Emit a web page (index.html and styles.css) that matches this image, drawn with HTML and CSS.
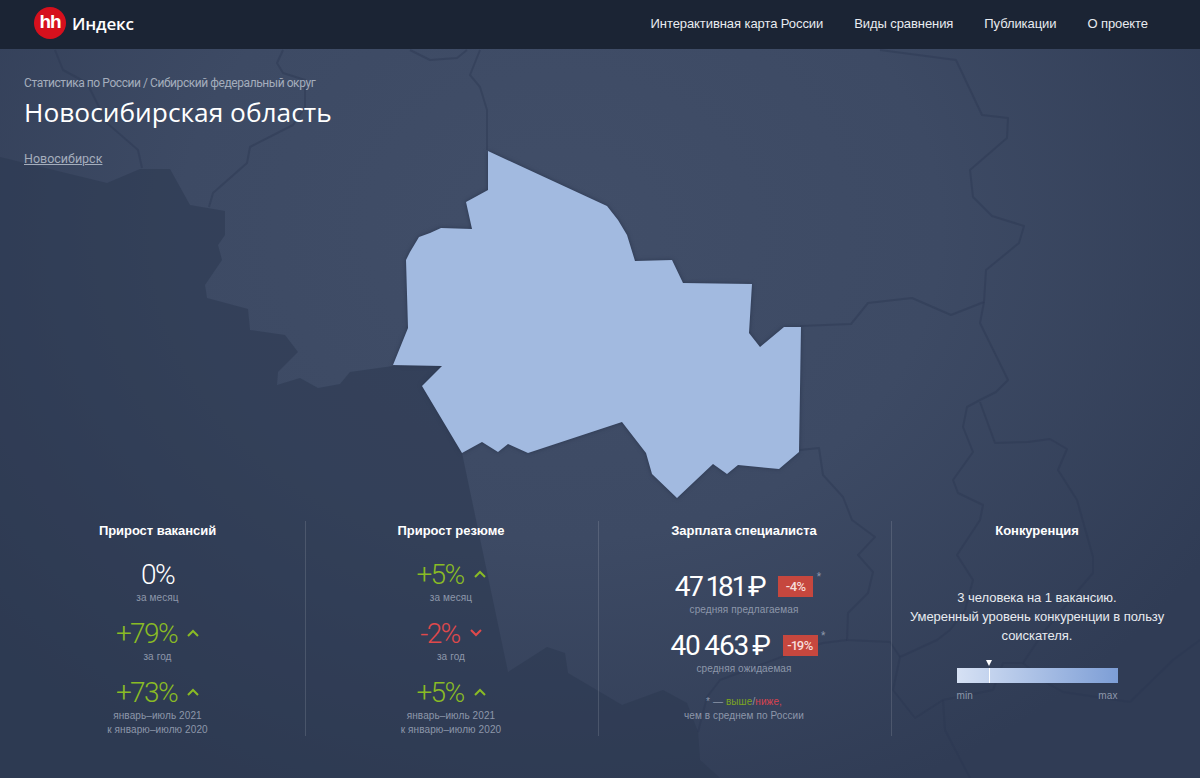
FILE: index.html
```html
<!DOCTYPE html>
<html lang="ru">
<head>
<meta charset="utf-8">
<title>hh Индекс — Новосибирская область</title>
<link rel="stylesheet" href="styles.css">
</head>
<body>
<svg class="map" viewBox="0 0 1200 778" width="1200" height="778" aria-hidden="true">
  <polygon class="map-dark" points="0,157 107,183 140,169 170,169 190,205 225,211 225,235 218,245 222,260 205,285 207,298 248,309 250,330 285,335 298,352 278,372 277,385 300,378 318,388 340,384 350,372 393,366 442,366 423,387 462,453 508,672 547,647 565,653 568,673 622,705 663,690 687,703 698,732 700,760 720,778 0,778"/>
  <polyline class="map-line" points="55,50 63,70 87,83 107,123 138,150 142,168"/>
  <polyline class="map-line" points="283,50 277,63 283,73 305,80 305,107 293,125 250,147 247,163 213,193 209,207"/>
  <polyline class="map-line" points="410,50 430,60 457,58 467,50"/>
  <polyline class="map-line" points="480,50 470,75 480,87 487,110 487,150"/>
  <polyline class="map-line" points="880,50 956,60 982,115 1008,118 1007,138 970,170 973,197 992,216 1024,226 1019,243 986,270 984,302 951,315 912,298 868,303 851,324 800,326"/>
  <polyline class="map-line" points="984,302 980,323 1008,380 996,392 980,400 967,407 963,427 973,452 953,480 958,493 983,505 980,520 957,555 973,580 965,610 950,630 937,640 900,657 893,690 915,718 943,700 993,690 1003,663 1023,663 1043,633 1070,600 1093,573 1093,557 1077,500 1058,470 1067,449 1050,439 1028,442 995,443 980,402"/>
  <polyline class="map-line" points="943,700 945,730 970,778"/>
  <polyline class="map-line" points="1023,663 1047,683 1063,692 1130,702 1173,660 1200,640"/>
  <polyline class="map-line" points="800,450 819,448 823,475 843,497 852,520 875,537 858,555 873,572 868,593 848,613 847,640 890,642 900,657"/>
  <polyline class="map-line" points="847,640 823,643 800,650 760,665 720,680 707,697 698,732"/>
  <polygon class="map-region" points="488,151 607,206 618,220 627,235 635,261 672,260 683,283 752,284 749,333 760,347 784,327 801,327 799,452 779,469 738,465 727,474 713,464 677,498 652,474 646,453 622,422 528,453 508,444 498,452 482,442 462,453 422,386 442,366 393,365 408,328 406,260 410,252 419,237 430,233 441,228 472,229 466,202 488,190"/>
</svg>

<header class="topbar">
  <a class="brand" href="#">
    <span class="brand-mark">hh</span>
    <span class="brand-name">Индекс</span>
  </a>
  <nav class="nav">
    <a href="#">Интерактивная карта России</a>
    <a href="#">Виды сравнения</a>
    <a href="#">Публикации</a>
    <a href="#">О проекте</a>
  </nav>
</header>

<main class="content">
  <section class="intro">
    <p class="crumbs">Статистика по России / Сибирский федеральный округ</p>
    <h1 class="title">Новосибирская область</h1>
    <a class="city" href="#">Новосибирск</a>
  </section>

  <section class="stats">
    <article class="col">
      <h2 class="col-title">Прирост вакансий</h2>
      <div class="items">
        <div class="item">
          <div class="value">0%</div>
          <div class="label">за месяц</div>
        </div>
        <div class="item">
          <div class="value up">+79%<svg class="chev" viewBox="0 0 12 8"><polyline points="1,7 6,2 11,7"/></svg></div>
          <div class="label">за год</div>
        </div>
        <div class="item">
          <div class="value up">+73%<svg class="chev" viewBox="0 0 12 8"><polyline points="1,7 6,2 11,7"/></svg></div>
          <div class="label">январь–июль 2021<br>к январю–июлю 2020</div>
        </div>
      </div>
    </article>

    <article class="col">
      <h2 class="col-title">Прирост резюме</h2>
      <div class="items">
        <div class="item">
          <div class="value up">+5%<svg class="chev" viewBox="0 0 12 8"><polyline points="1,7 6,2 11,7"/></svg></div>
          <div class="label">за месяц</div>
        </div>
        <div class="item">
          <div class="value down">-2%<svg class="chev" viewBox="0 0 12 8"><polyline points="1,1 6,6 11,1"/></svg></div>
          <div class="label">за год</div>
        </div>
        <div class="item">
          <div class="value up">+5%<svg class="chev" viewBox="0 0 12 8"><polyline points="1,7 6,2 11,7"/></svg></div>
          <div class="label">январь–июль 2021<br>к январю–июлю 2020</div>
        </div>
      </div>
    </article>

    <article class="col">
      <h2 class="col-title">Зарплата специалиста</h2>
      <div class="items items-salary">
        <div class="item">
          <div class="value salary">47&#8201;181&#8201;₽<span class="badge">-4%</span><span class="star">*</span></div>
          <div class="label">средняя предлагаемая</div>
        </div>
        <div class="item">
          <div class="value salary">40&#8201;463&#8201;₽<span class="badge">-19%</span><span class="star">*</span></div>
          <div class="label">средняя ожидаемая</div>
        </div>
      </div>
      <p class="note">* — <span class="note-up">выше</span>/<span class="note-down">ниже,</span><br>чем в среднем по России</p>
    </article>

    <article class="col">
      <h2 class="col-title">Конкуренция</h2>
      <p class="competition">3 человека на 1 вакансию.<br>Умеренный уровень конкуренции в пользу соискателя.</p>
      <div class="scale">
        <div class="scale-bar">
          <span class="scale-mark"></span>
        </div>
        <div class="scale-labels"><span>min</span><span>max</span></div>
      </div>
    </article>
  </section>
</main>
</body>
</html>
```

FILE: styles.css
```css
* { box-sizing: border-box; }

html, body { margin: 0; padding: 0; }

body {
  position: relative;
  width: 1200px;
  height: 778px;
  overflow: hidden;
  display: flex;
  flex-direction: column;
  font-family: "Liberation Sans", Arial, sans-serif;
  color: #fff;
  background: radial-gradient(ellipse 760px 620px at 560px 230px, #414e68 0%, #3d4a64 50%, #303c55 100%);
}

.map { position: absolute; left: 0; top: 0; }
.map-dark { fill: #2c3951; fill-opacity: .55; }
.map-line { fill: none; stroke: #2b3851; stroke-width: 2; stroke-opacity: .42; stroke-linejoin: round; }
.map-region { fill: #a2bae0; filter: drop-shadow(0 0 2px #2b3750); }

.topbar {
  position: relative;
  flex: none;
  height: 49px;
  display: flex;
  align-items: center;
  justify-content: space-between;
  padding: 0 52px 3px 34px;
  background: #1b2434;
}

.brand { display: flex; align-items: center; gap: 6px; color: #fff; text-decoration: none; }

.brand-mark {
  width: 32px;
  height: 32px;
  border-radius: 50%;
  background: #d6101d;
  text-align: center;
  font-size: 19px;
  line-height: 30px;
  font-weight: 700;
  letter-spacing: -1px;
}

.brand-name { font-family: "Open Sans", sans-serif; font-size: 17px; font-weight: 600; letter-spacing: -.2px; }

.nav { display: flex; gap: 31px; }
.nav a { color: #e8ebf0; font-size: 13px; letter-spacing: -.08px; text-decoration: none; }

.content {
  position: relative;
  flex: 1;
  display: flex;
  flex-direction: column;
  justify-content: space-between;
  padding-bottom: 42px;
}

.intro { padding: 26px 24px 0; font-family: "Roboto", sans-serif; }

.crumbs { margin: 0; font-size: 12px; line-height: 16px; letter-spacing: -.43px; color: #a4adbc; }

.title { margin: 3px 0 0; font-family: "Open Sans", sans-serif; font-size: 26.3px; line-height: 36px; font-weight: 400; color: #fff; }

.city { display: inline-block; margin-top: 21px; font-size: 12.5px; line-height: 16px; color: #a4adbc; }

.stats {
  display: grid;
  grid-template-columns: repeat(4, 293px);
  padding-left: 12px;
}

.col { height: 215px; padding-right: 2px; text-align: center; }
.col + .col { border-left: 1px solid rgba(255, 255, 255, .13); }

.col-title { margin: 0; font-size: 13px; line-height: 20px; font-weight: 700; letter-spacing: -.05px; color: #fff; }

.items { display: flex; flex-direction: column; gap: 11px; margin-top: 16px; }
.items-salary { margin-top: 28px; }

.value {
  display: flex;
  align-items: center;
  justify-content: center;
  height: 34px;
  font-family: "Roboto", sans-serif;
  font-size: 28px;
  font-weight: 300;
  letter-spacing: -1.6px;
  color: #fff;
}

.up { color: #8abb25; }
.down { color: #e0494b; }

.chev { width: 12px; height: 8px; margin-left: 10px; fill: none; stroke: currentColor; stroke-width: 2; }

.label { font-size: 10px; line-height: 14px; letter-spacing: .1px; color: #8d97aa; }

.salary { font-weight: 400; letter-spacing: -1.3px; word-spacing: -1px; font-variant-numeric: proportional-nums; }

.badge {
  width: 35px;
  height: 21px;
  margin-left: 13px;
  background: #c6473e;
  color: #f6dcd9;
  font-size: 13px;
  line-height: 21px;
  font-weight: 500;
  letter-spacing: -.5px;
}

.star { align-self: flex-start; margin: 2px -7px 0 3px; width: 4px; font-size: 10px; line-height: 12px; color: #8d97aa; }

.note { margin: 19px 0 0; font-size: 10px; line-height: 14px; letter-spacing: .1px; color: #8d97aa; }
.note-up { color: #7ba41f; }
.note-down { color: #d8434f; }

.competition {
  margin: 47px 10px 0;
  font-size: 13px;
  line-height: 19px;
  letter-spacing: -.05px;
  color: #e8ebf0;
}

.scale { width: 161px; margin: 23px auto 0; }

.scale-bar {
  position: relative;
  height: 15px;
  background: linear-gradient(90deg, #d6e1f4, #7d9ed6);
}

.scale-mark {
  position: absolute;
  left: 32px;
  top: 0;
  width: 1px;
  height: 15px;
  background: #fff;
}

.scale-mark::before {
  content: "";
  position: absolute;
  left: -3px;
  top: -8px;
  border-style: solid;
  border-width: 6px 3.5px 0;
  border-color: #fff transparent transparent;
}

.scale-labels {
  display: flex;
  justify-content: space-between;
  margin-top: 6px;
  font-size: 10px;
  line-height: 14px;
  letter-spacing: .1px;
  color: #8d97aa;
}
```
